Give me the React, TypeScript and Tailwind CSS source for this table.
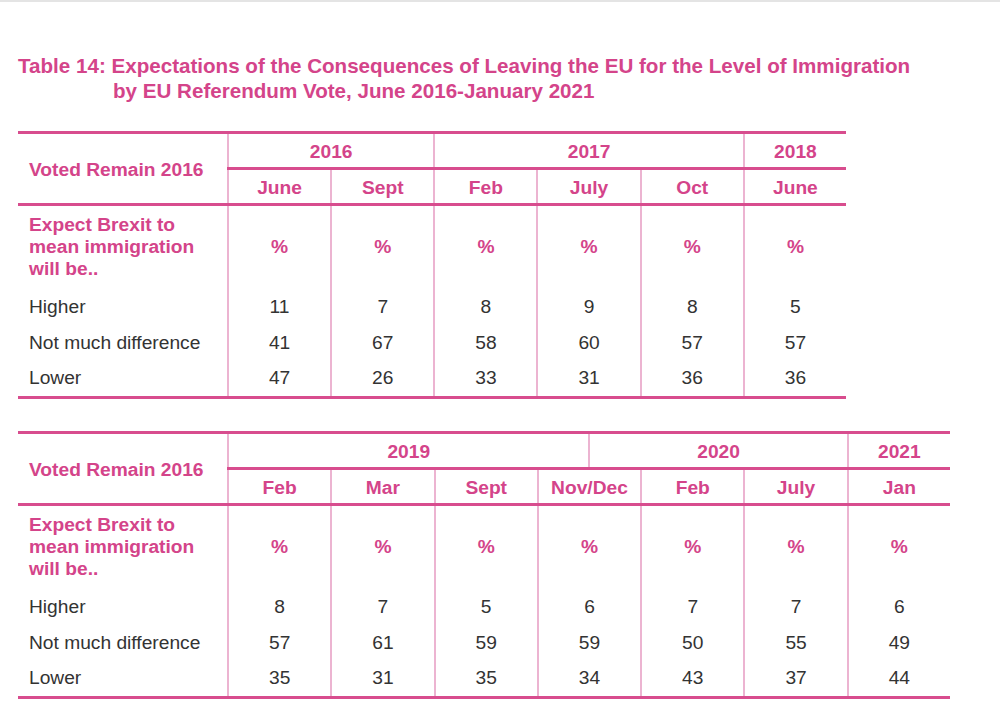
import React from 'react';

type Year = { label: string; span: string };
type TableData = {
  width: string;
  grid: string;
  years: Year[];
  months: string[];
  rows: { label: string; values: number[] }[];
};

const PINK = 'text-[#d4448a]';

const table1: TableData = {
  width: 'w-[828px]',
  grid: 'grid-cols-12',
  years: [
    { label: '2016', span: 'col-span-4' },
    { label: '2017', span: 'col-span-6' },
    { label: '2018', span: 'col-span-2' },
  ],
  months: ['June', 'Sept', 'Feb', 'July', 'Oct', 'June'],
  rows: [
    { label: 'Higher', values: [11, 7, 8, 9, 8, 5] },
    { label: 'Not much difference', values: [41, 67, 58, 60, 57, 57] },
    { label: 'Lower', values: [47, 26, 33, 31, 36, 36] },
  ],
};

const table2: TableData = {
  width: 'w-[932px]',
  grid: 'grid-cols-14',
  years: [
    { label: '2019', span: 'col-span-7' },
    { label: '2020', span: 'col-span-5' },
    { label: '2021', span: 'col-span-2' },
  ],
  months: ['Feb', 'Mar', 'Sept', 'Nov/Dec', 'Feb', 'July', 'Jan'],
  rows: [
    { label: 'Higher', values: [8, 7, 5, 6, 7, 7, 6] },
    { label: 'Not much difference', values: [57, 61, 59, 59, 50, 55, 49] },
    { label: 'Lower', values: [35, 31, 35, 34, 43, 37, 44] },
  ],
};

const rowHeights = ['h-[36px]', 'h-[36px]', 'h-[35px]'];

function SurveyTable({ data }: { data: TableData }) {
  return (
    <div className={`${data.width} border-y-[3px] border-[#d84d8e]`}>
      {/* header */}
      <div className="flex border-b-[3px] border-[#d84d8e]">
        <div className={`w-[209px] shrink-0 flex items-center pl-[11px] pt-[4px] font-bold ${PINK}`}>
          Voted Remain 2016
        </div>
        <div className={`flex-1 grid ${data.grid}`}>
          {data.years.map((y) => (
            <div
              key={y.label}
              className={`${y.span} h-[33px] pt-[3px] flex items-center justify-center border-l-2 border-[#ecb4d1] font-bold ${PINK}`}
            >
              {y.label}
            </div>
          ))}
          <div className="col-span-full h-[3px] bg-[#d84d8e]" />
          {data.months.map((m, i) => (
            <div
              key={i}
              className={`col-span-2 h-[33px] pt-[3px] flex items-center justify-center border-l-2 border-[#ecb4d1] font-bold ${PINK}`}
            >
              {m}
            </div>
          ))}
        </div>
      </div>

      {/* body */}
      <div className="flex">
        <div className="w-[209px] shrink-0 pl-[11px] pt-[8px] text-[#333]">
          <div className={`h-[66px] font-bold leading-[22px] ${PINK}`}>
            Expect Brexit to
            <br />
            mean immigration
            <br />
            will be..
          </div>
          <div className="h-[9px]" />
          {data.rows.map((r, i) => (
            <div key={r.label} className={`${rowHeights[i]} flex items-center`}>
              {r.label}
            </div>
          ))}
        </div>
        <div className={`flex-1 grid ${data.grid}`}>
          {data.months.map((_, c) => (
            <div key={c} className="col-span-2 border-l-2 border-[#ecb4d1] pt-[8px] text-[#333]">
              <div className={`h-[66px] flex items-center justify-center font-bold ${PINK}`}>%</div>
              <div className="h-[9px]" />
              {data.rows.map((r, i) => (
                <div key={r.label} className={`${rowHeights[i]} flex items-center justify-center`}>
                  {r.values[c]}
                </div>
              ))}
            </div>
          ))}
        </div>
      </div>
    </div>
  );
}

export default function App() {
  return (
    <div className="w-[1000px] h-[725px] bg-white border-t-2 border-[#e4e4e4] font-['Liberation_Sans',Arial,sans-serif] text-[19.2px] overflow-hidden">
      <h1 className={`mt-[51px] pl-[18px] text-[20.6px] leading-[25px] font-bold ${PINK}`}>
        Table 14: Expectations of the Consequences of Leaving the EU for the Level of Immigration
        <br />
        <span className="pl-[95px]">by EU Referendum Vote, June 2016-January 2021</span>
      </h1>
      <div className="pl-[18px] mt-[28px] flex flex-col gap-[32px]">
        <SurveyTable data={table1} />
        <SurveyTable data={table2} />
      </div>
    </div>
  );
}
